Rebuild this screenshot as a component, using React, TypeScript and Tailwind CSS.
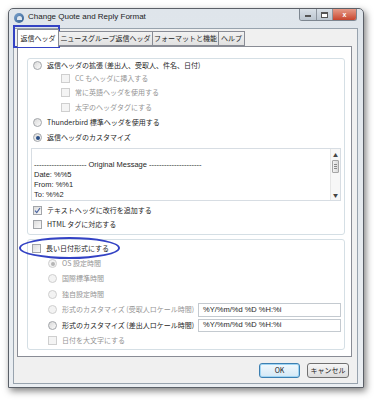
import type { ReactNode } from "react";

type OptProps = {
  checked?: boolean;
  disabled?: boolean;
  children: ReactNode;
};

function Radio({ checked, disabled, children }: OptProps) {
  return (
    <div className="flex items-center gap-[5px]">
      <span
        className={`flex h-[9px] w-[9px] shrink-0 items-center justify-center rounded-full border ${
          disabled
            ? "border-[#cfcfcf] bg-[#f3f3f3]"
            : "border-[#a2a5a9] bg-gradient-to-br from-[#d9d9d9] to-[#fbfbfb]"
        }`}
      >
        {checked && (
          <span
            className={`h-[4px] w-[4px] rounded-full ${
              disabled ? "bg-[#b5b5b5]" : "bg-[#2a4f86]"
            }`}
          />
        )}
      </span>
      <span className={disabled ? "text-[#959595]" : "text-[#262626]"}>
        {children}
      </span>
    </div>
  );
}

function Check({ checked, disabled, children }: OptProps) {
  return (
    <div className="flex items-center gap-[5px]">
      <span
        className={`flex h-[9px] w-[9px] shrink-0 items-center justify-center border ${
          disabled
            ? "border-[#cfcfcf] bg-[#f4f4f4]"
            : "border-[#a2a5a9] bg-gradient-to-br from-[#dcdcdc] to-[#fafafa]"
        }`}
      >
        {checked && (
          <svg width="7" height="7" viewBox="0 0 7 7">
            <path
              d="M1 3.6 L2.8 5.6 L6 1"
              fill="none"
              stroke="#4a64a0"
              strokeWidth="1.2"
            />
          </svg>
        )}
      </span>
      <span className={disabled ? "text-[#959595]" : "text-[#262626]"}>
        {children}
      </span>
    </div>
  );
}

export default function App() {
  return (
    <div className="relative h-[400px] w-[374px] overflow-hidden bg-white font-['Noto_Sans_CJK_JP',sans-serif] text-[7px] leading-none">
      {/* window */}
      <div className="ml-[8px] mt-[8px] flex h-[380px] w-[356px] flex-col rounded-t-[5px] border border-[#5b6068] bg-gradient-to-b from-[#dfe5eb] to-[#eaeef2] shadow-[2px_3px_7px_rgba(0,0,0,0.5)]">
        {/* title bar */}
        <div className="flex h-[19px] shrink-0 items-start">
          <div className="ml-[5px] mt-[4px] flex h-[10px] w-[10px] items-center justify-center rounded-full bg-gradient-to-br from-[#7fa6cf] to-[#2f5a8e]">
            <span className="h-[4px] w-[5px] rounded-t-full bg-[#dfe7ef]" />
          </div>
          <span className="ml-[4px] mt-[4px] font-['Liberation_Sans',sans-serif] text-[8px] text-[#1b1b1b]">
            Change Quote and Reply Format
          </span>
          <div className="ml-auto mr-[6px] flex h-[12px] overflow-hidden rounded-b-[3px] border border-t-0 border-[#7d8690]">
            <div className="flex w-[17px] items-center justify-center border-r border-[#8d959e] bg-gradient-to-b from-[#d9e0e7] to-[#bcc6d0]">
              <span className="mt-[3px] h-[2px] w-[6px] border border-[#555] bg-white" />
            </div>
            <div className="flex w-[16px] items-center justify-center border-r border-[#8d959e] bg-gradient-to-b from-[#d9e0e7] to-[#bcc6d0]">
              <span className="h-[6px] w-[7px] border border-t-2 border-[#555] bg-white" />
            </div>
            <div className="flex w-[23px] items-center justify-center bg-gradient-to-b from-[#e59a88] to-[#c7442d] font-['Liberation_Sans',sans-serif] text-[7px] font-bold text-white">
              x
            </div>
          </div>
        </div>

        {/* client area */}
        <div className="mb-[3px] ml-[4px] mr-[5px] flex flex-1 flex-col border border-[#98a3ae] bg-[#f0f0f0] pl-[3px] pr-[5px]">
          {/* tabs */}
          <div className="relative z-10 flex h-[17px] items-end text-[#262626]">
            <div className="mb-[-1px] flex h-[18px] w-[42px] items-center justify-center border border-b-0 border-[#898c95] bg-white">
              返信ヘッダ
            </div>
            <div className="flex h-[15px] w-[94px] items-center justify-center border border-l-0 border-[#898c95] bg-gradient-to-b from-[#f2f2f2] to-[#e1e1e1]">
              ニュースグループ返信ヘッダ
            </div>
            <div className="flex h-[15px] w-[66px] items-center justify-center border border-l-0 border-[#898c95] bg-gradient-to-b from-[#f2f2f2] to-[#e1e1e1]">
              フォーマットと機能
            </div>
            <div className="flex h-[15px] w-[26px] items-center justify-center border border-l-0 border-[#898c95] bg-gradient-to-b from-[#f2f2f2] to-[#e1e1e1]">
              ヘルプ
            </div>
          </div>

          {/* tab panel */}
          <div className="flex h-[311px] flex-col border border-[#898c95] bg-white pb-[8px] pl-[9px] pr-[6px] pt-[11px]">
            {/* group 1 */}
            <div className="flex flex-col rounded-[3px] border border-[#d5dfe5] pb-[3px] pl-[3px] pr-[3px]">
              <div className="flex h-[12px] items-center pl-[2px]">
                <Radio>返信ヘッダの拡張 (差出人、受取人、件名、日付)</Radio>
              </div>
              <div className="flex h-[14px] items-center pl-[30px]">
                <Check disabled>CC もヘッダに挿入する</Check>
              </div>
              <div className="flex h-[15px] items-center pl-[30px]">
                <Check disabled>常に英語ヘッダを使用する</Check>
              </div>
              <div className="flex h-[15px] items-center pl-[30px]">
                <Check disabled>太字のヘッダタグにする</Check>
              </div>
              <div className="flex h-[15px] items-center pl-[2px]">
                <Radio>Thunderbird 標準ヘッダを使用する</Radio>
              </div>
              <div className="flex h-[15px] items-center pl-[2px]">
                <Radio checked>返信ヘッダのカスタマイズ</Radio>
              </div>

              {/* text area */}
              <div className="mt-[3px] flex h-[53px] border border-[#d7dde3] bg-white">
                <div className="flex flex-1 flex-col pl-[2px] pt-[11px] font-['Liberation_Sans','Noto_Sans_CJK_JP',sans-serif] text-[7.5px] leading-[10px] text-[#262626]">
                  <span className="whitespace-pre">
                    --------------------- Original Message ---------------------
                  </span>
                  <span>Date: %%5</span>
                  <span>From: %%1</span>
                  <span>To: %%2</span>
                </div>
                <div className="flex w-[10px] flex-col items-center border-l border-[#e6e6e6] bg-[#f7f7f7]">
                  <span className="mt-[3px] text-[5px] text-[#444]">▲</span>
                  <div className="mt-[3px] flex h-[13px] w-[7px] flex-col items-center justify-center gap-[1px] rounded-[1px] border border-[#a5a5a5] bg-gradient-to-r from-[#f2f2f2] to-[#d9d9d9]">
                    <span className="h-px w-[3px] bg-[#888]" />
                    <span className="h-px w-[3px] bg-[#888]" />
                    <span className="h-px w-[3px] bg-[#888]" />
                  </div>
                  <span className="mb-[3px] mt-auto text-[5px] text-[#444]">▼</span>
                </div>
              </div>

              <div className="mt-[2px] flex h-[14px] items-center pl-[2px]">
                <Check checked>テキストヘッダに改行を追加する</Check>
              </div>
              <div className="flex h-[14px] items-center pl-[2px]">
                <Check>HTML タグに対応する</Check>
              </div>
            </div>

            {/* group 2 */}
            <div className="relative mt-[4px] flex flex-col rounded-[3px] border border-[#d5dfe5] pb-[2px] pl-[4px] pr-[3px] pt-[1px]">
              <div className="flex h-[15px] items-center">
                <Check>長い日付形式にする</Check>
              </div>
              <div className="flex h-[15px] items-center pl-[16px]">
                <Radio checked disabled>OS 設定時間</Radio>
              </div>
              <div className="flex h-[15px] items-center pl-[16px]">
                <Radio disabled>国際標準時間</Radio>
              </div>
              <div className="flex h-[16px] items-center pl-[16px]">
                <Radio disabled>独自設定時間</Radio>
              </div>
              <div className="flex h-[15px] items-center pl-[16px]">
                <Radio disabled>形式のカスタマイズ (受取人ロケール時間)</Radio>
                <div className="ml-auto flex h-[14px] w-[143px] items-center border border-[#c4cad0] bg-white pl-[4px] font-['Liberation_Sans',sans-serif] text-[7.5px] text-[#262626]">
                  %Y/%m/%d %D %H:%i
                </div>
              </div>
              <div className="flex h-[16px] items-center pl-[16px]">
                <Radio>形式のカスタマイズ (差出人ロケール時間)</Radio>
                <div className="ml-auto flex h-[13px] w-[143px] items-center border border-[#c4cad0] bg-white pl-[4px] font-['Liberation_Sans',sans-serif] text-[7.5px] text-[#262626]">
                  %Y/%m/%d %D %H:%i
                </div>
              </div>
              <div className="flex h-[14px] items-center pl-[16px]">
                <Check disabled>日付を大文字にする</Check>
              </div>

              {/* annotation ellipse */}
              <div className="absolute left-[-9px] top-[-3px] h-[22px] w-[101px] rounded-[50%] border-2 border-[#3342c4]" />
            </div>
          </div>

          {/* buttons */}
          <div className="flex flex-1 items-center justify-end gap-[7px] pr-[3px]">
            <button className="h-[15px] w-[41px] rounded-[3px] border border-[#3c7fb1] bg-gradient-to-b from-[#f2f9fd] to-[#d3e8f6] text-[7px] text-[#1c1c1c] shadow-[inset_0_0_0_1px_#9fd5f4]">
              OK
            </button>
            <button className="h-[15px] w-[42px] rounded-[3px] border border-[#707070] bg-gradient-to-b from-[#f6f6f6] to-[#dcdcdc] text-[7px] text-[#1c1c1c]">
              キャンセル
            </button>
          </div>
        </div>
      </div>

      {/* annotation rectangle around first tab */}
      <div className="absolute left-[13px] top-[25px] h-[23px] w-[47px] border-2 border-[#3342c4]" />
    </div>
  );
}
